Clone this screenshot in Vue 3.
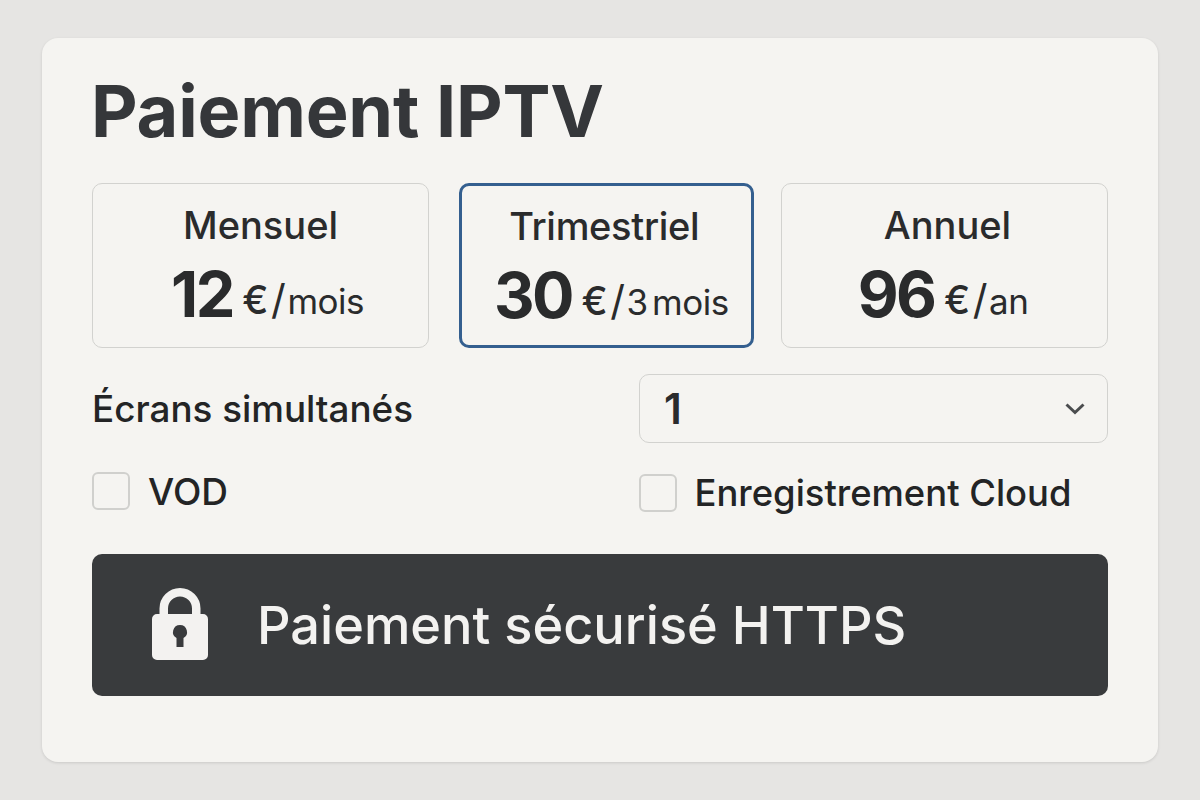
<template>
  <div class="page">
    <form class="card" @submit.prevent>
      <h1 class="title">Paiement IPTV</h1>

      <div class="plans">
        <button
          v-for="plan in plans"
          :key="plan.name"
          type="button"
          class="plan"
          :class="[plan.id, { 'plan--active': selected === plan.name }]"
          @click="selected = plan.name"
        >
          <span class="plan__name">{{ plan.name }}</span>
          <span class="plan__price">
            <b>{{ plan.price }}</b>
            <span class="plan__unit"><i>€</i><em>/</em>{{ plan.period }}</span>
          </span>
        </button>
      </div>

      <div class="row row--screens">
        <span class="label">Écrans simultanés</span>
        <div class="select">
          <span>1</span>
          <svg width="22" height="14" viewBox="0 0 22 14" fill="none">
            <path d="M2.500 2.500 11 10.500 19.500 2.500" stroke="#4a4c4e" stroke-width="3" />
          </svg>
        </div>
      </div>

      <div class="row row--options">
        <label class="check check--vod"><span class="box"></span>VOD</label>
        <label class="check check--cloud"><span class="box"></span>Enregistrement Cloud</label>
      </div>

      <button type="submit" class="pay">
        <svg class="pay__lock" width="56" height="72" viewBox="0 0 56 72">
          <path d="M11.750 30V20.500a16.250 16.250 0 0 1 32.500 0V30" fill="none" stroke="#f3f2f0" stroke-width="8.500" />
          <path
            fill="#f3f2f0"
            fill-rule="evenodd"
            d="M5 26h46a5 5 0 0 1 5 5v36a5 5 0 0 1-5 5H5a5 5 0 0 1-5-5V31a5 5 0 0 1 5-5ZM28 37a7 7 0 0 0-3.500 13.060V59h7v-8.940A7 7 0 0 0 28 37Z"
          />
        </svg>
        <span>Paiement sécurisé HTTPS</span>
      </button>
    </form>
  </div>
</template>

<script setup>
import { ref } from 'vue';

const selected = ref('Trimestriel');

const plans = [
  { id: 'mensuel', name: 'Mensuel', price: '12', period: 'mois' },
  { id: 'trimestriel', name: 'Trimestriel', price: '30', period: '3 mois' },
  { id: 'annuel', name: 'Annuel', price: '96', period: 'an' },
];
</script>

<style>
html, body {
  margin: 0;
  background: #e6e5e3;
}
</style>

<style scoped>
.page {
  box-sizing: border-box;
  width: 1200px;
  height: 800px;
  padding: 38px 42px;
  background: #e6e5e3;
  font-family: Inter, "Liberation Sans", sans-serif;
  color: #2a2b2c;
}

.card {
  box-sizing: border-box;
  height: 724px;
  padding: 30px 50px 0;
  background: #f5f4f1;
  border-radius: 16px;
  box-shadow: 0 1px 3px rgba(0, 0, 0, 0.12);
}

.title {
  margin: 0 0 30px -1px;
  height: 85px;
  font-size: 72px;
  line-height: 85px;
  font-weight: 700;
  letter-spacing: -0.2px;
  color: #35373a;
}

.plans {
  display: grid;
  grid-template-columns: 337px 295px 327px;
  column-gap: 28.500px;
  height: 165px;
}

.plan {
  display: flex;
  flex-direction: column;
  align-items: center;
  box-sizing: border-box;
  padding: 19px 0 0;
  background: none;
  border: 1.5px solid #d2d2cf;
  border-radius: 10px;
  font-family: inherit;
  color: inherit;
}

.plan--active {
  border: 3px solid #345f8f;
  padding-top: 17.500px;
  margin: 0 -1px 0 1.500px;
}

.plan__name {
  font-size: 38px;
  line-height: 44px;
  font-weight: 500;
}

.plan__price {
  display: flex;
  align-items: baseline;
  margin-top: 13px;
  line-height: 68px;
}

.plan__price b {
  font-size: 63px;
  font-weight: 700;
  letter-spacing: -2.500px;
  margin-right: 9.500px;
}

.plan__unit {
  display: flex;
  align-items: baseline;
  transform: translateY(-3px);
  font-size: 35px;
  letter-spacing: -0.5px;
  white-space: pre;
}

.plan__unit i {
  font-size: 39px;
  font-style: normal;
  font-weight: 500;
  margin-right: 3px;
}

.plan__unit em {
  font-size: 41px;
  font-style: normal;
  margin-right: 2px;
}

.mensuel .plan__price {
  padding-left: 14px;
}

.trimestriel .plan__name {
  padding-right: 4px;
  letter-spacing: -0.3px;
}

.trimestriel .plan__price {
  padding-left: 10px;
  word-spacing: -5px;
}

.annuel .plan__name {
  padding-left: 6px;
}

.annuel .plan__price {
  padding-right: 3px;
}

.row {
  display: grid;
  grid-template-columns: 547px 469px;
  align-items: center;
}

.row--screens {
  margin-top: 26px;
  height: 69px;
}

.label {
  font-size: 36.800px;
  font-weight: 500;
  color: #232425;
}

.select {
  box-sizing: border-box;
  height: 69px;
  padding: 0 21px 0 24px;
  display: flex;
  align-items: center;
  justify-content: space-between;
  border: 1.5px solid #d2d2cf;
  border-radius: 10px;
  font-size: 42px;
  font-weight: 600;
}

.row--options {
  margin-top: 28px;
  height: 44px;
}

.check {
  display: flex;
  align-items: center;
  gap: 18px;
  font-size: 37px;
  font-weight: 500;
  color: #232425;
}

.check--vod {
  margin-top: -4px;
}

.check--cloud {
  gap: 17.500px;
  font-size: 36.400px;
  white-space: nowrap;
}

.box {
  box-sizing: border-box;
  width: 38px;
  height: 38px;
  border: 2.500px solid #d0d0cd;
  border-radius: 6px;
}

.pay {
  display: flex;
  align-items: center;
  gap: 49px;
  box-sizing: border-box;
  width: 100%;
  height: 142px;
  margin-top: 39px;
  padding: 0 0 0 60px;
  background: #393b3d;
  border: none;
  border-radius: 10px;
  font-family: inherit;
  font-size: 52.300px;
  font-weight: 500;
  color: #f3f2f0;
}

.pay__lock {
  margin-top: -2px;
}
</style>
